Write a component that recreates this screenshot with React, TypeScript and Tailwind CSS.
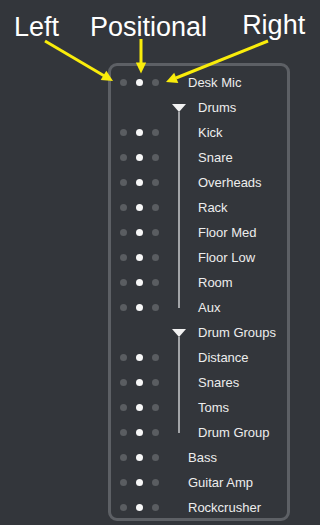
import React from "react";

type Item =
  | { kind: "leaf"; name: string }
  | { kind: "group"; name: string; children: string[] };

const items: Item[] = [
  { kind: "leaf", name: "Desk Mic" },
  {
    kind: "group",
    name: "Drums",
    children: ["Kick", "Snare", "Overheads", "Rack", "Floor Med", "Floor Low", "Room", "Aux"],
  },
  { kind: "group", name: "Drum Groups", children: ["Distance", "Snares", "Toms", "Drum Group"] },
  { kind: "leaf", name: "Bass" },
  { kind: "leaf", name: "Guitar Amp" },
  { kind: "leaf", name: "Rockcrusher" },
];

function Dots({ show = true }: { show?: boolean }) {
  return (
    <div className="w-[59px] h-full flex items-center pl-[9px] gap-[9px]">
      {show && (
        <>
          <div className="w-[7px] h-[7px] rounded-full bg-[#5a5d61]" />
          <div className="w-[7px] h-[7px] rounded-full bg-[#f7f7f7]" />
          <div className="w-[7px] h-[7px] rounded-full bg-[#5a5d61]" />
        </>
      )}
    </div>
  );
}

function Label({ text, indent }: { text: string; indent: boolean }) {
  return (
    <span className={`text-[13px] leading-none text-[#ededed] whitespace-nowrap ${indent ? "pl-[10px]" : ""}`}>
      {text}
    </span>
  );
}

function LeafRow({ name }: { name: string }) {
  return (
    <div className="h-[25px] flex items-center">
      <Dots />
      <div className="w-[18px]" />
      <Label text={name} indent={false} />
    </div>
  );
}

function GroupHeader({ name }: { name: string }) {
  return (
    <div className="h-[25px] flex items-center">
      <Dots show={false} />
      <div className="w-[18px] h-full flex flex-col items-center">
        <div className="h-[9px]" />
        <svg width="14" height="8" viewBox="0 0 14 8" className="block">
          <polygon points="0,0 14,0 7,8" fill="#f2f2f2" />
        </svg>
        <div className="w-[2px] flex-1 bg-[#a3a5a8]" />
      </div>
      <Label text={name} indent />
    </div>
  );
}

function ChildRow({ name, last }: { name: string; last: boolean }) {
  return (
    <div className="h-[25px] flex items-center">
      <Dots />
      <div className="w-[18px] h-full flex justify-center items-start">
        <div className={`w-[2px] bg-[#a3a5a8] ${last ? "h-[13px]" : "h-full"}`} />
      </div>
      <Label text={name} indent />
    </div>
  );
}

function Arrows() {
  const y = "#f9ec0b";
  return (
    <svg
      className="absolute inset-0 pointer-events-none"
      width="320"
      height="525"
      viewBox="0 0 320 525"
    >
      {/* Left */}
      <line x1="45" y1="41" x2="104" y2="75.7" stroke={y} strokeWidth="3" />
      <polygon points="113,81 100.7,80.1 106.3,70.7" fill={y} />
      {/* Positional */}
      <line x1="141" y1="39" x2="141" y2="63" stroke={y} strokeWidth="3" />
      <polygon points="141,73.5 135.8,62.5 146.2,62.5" fill={y} />
      {/* Right */}
      <line x1="268" y1="41" x2="176" y2="78" stroke={y} strokeWidth="3" />
      <polygon points="166,82 174.2,72.8 178.3,83" fill={y} />
    </svg>
  );
}

export default function App() {
  return (
    <div
      className="relative w-[320px] h-[525px] bg-[#33363b] overflow-hidden"
      style={{ fontFamily: '"Liberation Sans", Arial, sans-serif' }}
    >
      <div className="h-[63px] flex items-start pt-[14px] text-[27px] leading-[27px] text-white">
        <span className="ml-[14px]">Left</span>
        <span className="ml-[31px]">Positional</span>
        <span className="ml-[35px] -mt-[2px]">Right</span>
      </div>
      <div className="ml-[108px] w-[182px] h-[458px] border-[3px] border-[#5d6065] rounded-[9px] pt-[4px]">
        {items.map((it) =>
          it.kind === "leaf" ? (
            <LeafRow key={it.name} name={it.name} />
          ) : (
            <React.Fragment key={it.name}>
              <GroupHeader name={it.name} />
              {it.children.map((c, i) => (
                <ChildRow key={c} name={c} last={i === it.children.length - 1} />
              ))}
            </React.Fragment>
          )
        )}
      </div>
      <Arrows />
    </div>
  );
}
